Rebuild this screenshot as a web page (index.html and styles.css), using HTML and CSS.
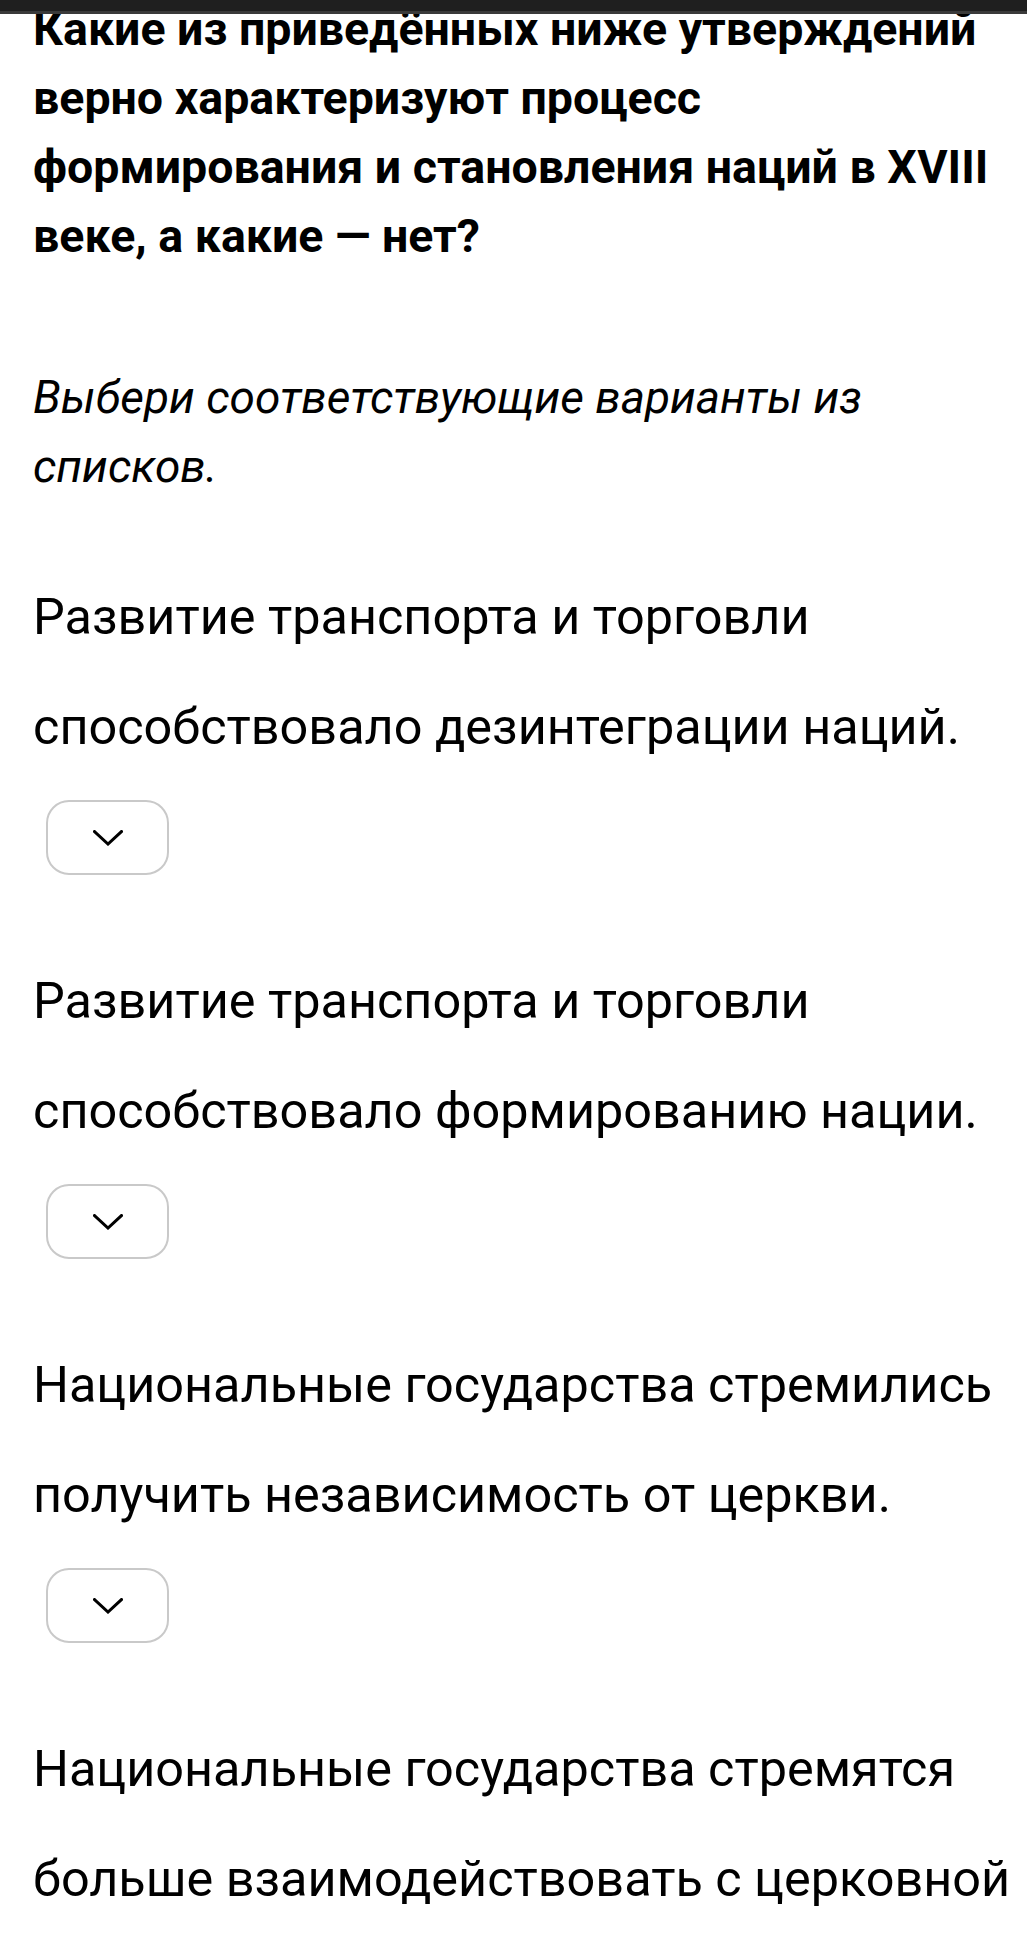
FILE: index.html
```html
<!DOCTYPE html>
<html lang="ru">
<head>
<meta charset="utf-8">
<title>Задание</title>
<link rel="stylesheet" href="styles.css">
</head>
<body>
<div class="topbar"></div>
<main class="page">
  <h1 class="question">Какие из приведённых ниже утверждений<br>верно характеризуют процесс<br>формирования и становления наций в XVIII<br>веке, а какие — нет?</h1>
  <p class="hint">Выбери соответствующие варианты из<br>списков.</p>
  <ul class="items">
    <li class="item">
      <p class="statement">Развитие транспорта и торговли<br>способствовало дезинтеграции наций.</p>
      <button class="select" type="button" aria-label="Выбрать"><svg viewBox="0 0 30 16" width="30" height="16"><path d="M1.5 1.5 L15 14 L28.5 1.5" /></svg></button>
    </li>
    <li class="item">
      <p class="statement">Развитие транспорта и торговли<br>способствовало формированию нации.</p>
      <button class="select" type="button" aria-label="Выбрать"><svg viewBox="0 0 30 16" width="30" height="16"><path d="M1.5 1.5 L15 14 L28.5 1.5" /></svg></button>
    </li>
    <li class="item">
      <p class="statement">Национальные государства стремились<br>получить независимость от церкви.</p>
      <button class="select" type="button" aria-label="Выбрать"><svg viewBox="0 0 30 16" width="30" height="16"><path d="M1.5 1.5 L15 14 L28.5 1.5" /></svg></button>
    </li>
    <li class="item">
      <p class="statement">Национальные государства стремятся<br>больше взаимодействовать с церковной</p>
    </li>
  </ul>
</main>
</body>
</html>
```
FILE: styles.css
```css
html, body {
  margin: 0;
  padding: 0;
  background: #fff;
}
body {
  font-family: Roboto, "Noto Sans", sans-serif;
  color: #000;
}
.topbar {
  position: fixed;
  top: 0;
  left: 0;
  right: 0;
  height: 11px;
  background: #1f1f1f;
  border-bottom: 3px solid #3a3a3a;
  z-index: 10;
}
.page {
  padding: 0 10px 0 33px;
  margin-top: -5px;
}
.question {
  margin: 0;
  font-size: 46.5px;
  font-weight: 700;
  line-height: 69px;
  white-space: nowrap;
}
.hint {
  margin: 92px 0 0;
  font-size: 46px;
  font-style: italic;
  font-weight: 400;
  line-height: 69px;
  white-space: nowrap;
}
.items {
  list-style: none;
  margin: 61px 0 0;
  padding: 0;
  display: flex;
  flex-direction: column;
  gap: 71px;
}
.item {
  display: flex;
  flex-direction: column;
  align-items: flex-start;
  gap: 18px;
}
.statement {
  margin: 0;
  font-size: 50.4px;
  line-height: 110px;
  white-space: nowrap;
}
.select {
  margin-left: 13px;
  width: 123px;
  height: 75px;
  box-sizing: border-box;
  border: 2px solid #c9c9c9;
  border-radius: 23px;
  background: #fff;
  display: flex;
  align-items: center;
  justify-content: center;
  padding: 0;
}
.select svg {
  display: block;
  fill: none;
  stroke: #000;
  stroke-width: 3;
  stroke-linecap: square;
}
```
